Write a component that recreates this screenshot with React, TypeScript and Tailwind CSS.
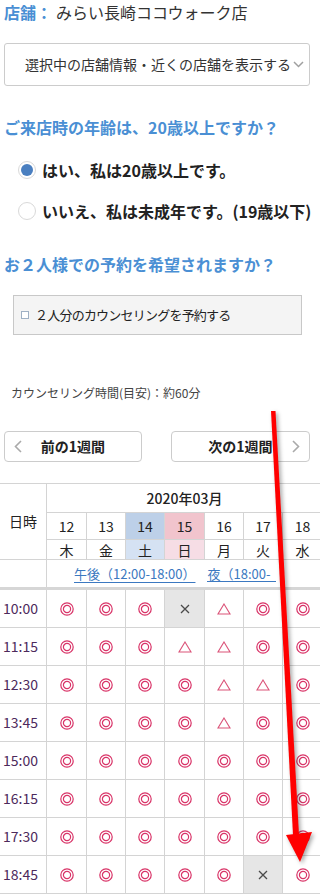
import React from 'react'

type Mark = 'o' | 't' | 'x'

const DAYS = [
  { num: '12', wd: '木', tone: 'plain' },
  { num: '13', wd: '金', tone: 'plain' },
  { num: '14', wd: '土', tone: 'sat' },
  { num: '15', wd: '日', tone: 'sun' },
  { num: '16', wd: '月', tone: 'plain' },
  { num: '17', wd: '火', tone: 'plain' },
  { num: '18', wd: '水', tone: 'plain' },
] as const

const SLOTS: { time: string; marks: Mark[] }[] = [
  { time: '10:00', marks: ['o', 'o', 'o', 'x', 't', 'o', 'o'] },
  { time: '11:15', marks: ['o', 'o', 'o', 't', 't', 'o', 'o'] },
  { time: '12:30', marks: ['o', 'o', 'o', 'o', 't', 't', 'o'] },
  { time: '13:45', marks: ['o', 'o', 'o', 'o', 't', 'o', 'o'] },
  { time: '15:00', marks: ['o', 'o', 'o', 'o', 'o', 'o', 'o'] },
  { time: '16:15', marks: ['o', 'o', 'o', 'o', 'o', 'o', 'o'] },
  { time: '17:30', marks: ['o', 'o', 'o', 'o', 'o', 'o', 'o'] },
  { time: '18:45', marks: ['o', 'o', 'o', 'o', 'o', 'x', 'o'] },
]

const COLS = 'grid grid-cols-[46px_39px_38px_38px_39px_38px_38px_39px] gap-px'

function Symbol({ mark }: { mark: Mark }) {
  if (mark === 'o') {
    return (
      <svg width="14" height="14" viewBox="0 0 14 14" fill="none" stroke="#d93468" strokeWidth="1.2">
        <circle cx="7" cy="7" r="6.2" />
        <circle cx="7" cy="7" r="3.6" />
      </svg>
    )
  }
  if (mark === 't') {
    return (
      <svg width="14" height="12" viewBox="0 0 14 12" fill="none" stroke="#db5479" strokeWidth="1.1">
        <path d="M7 1 L13 11 L1 11 Z" />
      </svg>
    )
  }
  return (
    <svg width="10" height="10" viewBox="0 0 10 10" fill="none" stroke="#4a4a4a" strokeWidth="1.3">
      <path d="M1 1 L9 9 M9 1 L1 9" />
    </svg>
  )
}

function Chevron({ dir }: { dir: 'left' | 'right' }) {
  return (
    <svg width="8" height="13" viewBox="0 0 8 13" fill="none" stroke="#aaaaaa" strokeWidth="1.6">
      <path d={dir === 'left' ? 'M7 1 L1.5 6.5 L7 12' : 'M1 1 L6.5 6.5 L1 12'} />
    </svg>
  )
}

function Radio({ checked, label }: { checked?: boolean; label: string }) {
  return (
    <div className="flex items-center gap-[6px] pl-[18px] text-[16px] font-bold leading-6 text-[#222]">
      <span className="flex h-[18px] w-[18px] shrink-0 items-center justify-center rounded-full border border-[#d9d9d9] bg-white">
        {checked && <span className="h-[12px] w-[12px] rounded-full bg-[#4a7fc0]" />}
      </span>
      <span className="whitespace-nowrap">{label}</span>
    </div>
  )
}

function Schedule() {
  return (
    <div className="mt-[21px] w-[320px] overflow-hidden text-[#222]">
      <div className={`${COLS} bg-[#d4d4d4] pt-px grid-rows-[28px_26px_19px_27px] text-[14px]`}>
        <div className="row-span-3 flex items-center justify-center bg-white">日時</div>
        <div className="col-span-7 flex items-center justify-center bg-white font-medium">2020年03月</div>
        {DAYS.map((d) => (
          <div
            key={d.num}
            className={`flex items-center justify-center ${
              d.tone === 'sat' ? 'bg-[#bdd0e8]' : d.tone === 'sun' ? 'bg-[#f1c4cd]' : 'bg-white'
            }`}
          >
            {d.num}
          </div>
        ))}
        {DAYS.map((d) => (
          <div
            key={d.wd}
            className={`flex items-center justify-center leading-none ${
              d.tone === 'sat' ? 'bg-[#d5e2f3]' : d.tone === 'sun' ? 'bg-[#f6dde5]' : 'bg-white'
            }`}
          >
            {d.wd}
          </div>
        ))}
        <div className="bg-white" />
        <div className="col-span-7 flex items-center gap-[12px] whitespace-nowrap bg-white pl-[27px] text-[13px] text-[#3b78c0]">
          <span className="underline underline-offset-[3px]">午後（12:00-18:00）</span>
          <span className="border-b border-[#3b78c0] pr-[6px] leading-[15px]">夜（18:00-</span>
        </div>
      </div>
      <div className="h-[3px] w-full bg-[#d6d6d6]" />
      <div className={`${COLS} bg-[#d4d4d4] auto-rows-[37px] pb-px`}>
        {SLOTS.map((s) => (
          <React.Fragment key={s.time}>
            <div className="flex items-center bg-white pl-[3px] text-[14px] text-[#4d2a5c]">{s.time}</div>
            {s.marks.map((m, i) => (
              <div
                key={i}
                className={`flex items-center justify-center ${m === 'x' ? 'bg-[#e6e6e6]' : 'bg-white'}`}
              >
                <Symbol mark={m} />
              </div>
            ))}
          </React.Fragment>
        ))}
      </div>
    </div>
  )
}

export default function App() {
  return (
    <div className="relative h-[894px] w-[320px] overflow-hidden bg-white font-['Noto_Sans_CJK_JP',sans-serif] text-[#333]">
      <p className="pl-1 text-[16px] leading-6 whitespace-nowrap">
        <span className="font-bold text-[#4a8fd4]">店舗：</span>
        <span className="ml-1">みらい長崎ココウォーク店</span>
      </p>

      <div className="mx-1 mt-[19px] flex h-[43px] w-[306px] items-center rounded-[3px] border border-[#cccccc] pl-5 text-[14px] text-[#333]">
        <span className="whitespace-nowrap">選択中の店舗情報・近くの店舗を表示する</span>
        <svg className="ml-[2px]" width="11" height="7" viewBox="0 0 11 7" fill="none" stroke="#a0a0a0" strokeWidth="1.5">
          <path d="M1 1 L5.5 5.5 L10 1" />
        </svg>
      </div>

      <h2 className="mt-[29px] pl-1 text-[16px] font-bold leading-6 text-[#4a8fd4]">ご来店時の年齢は、20歳以上ですか？</h2>
      <div className="mt-[19px]">
        <Radio checked label="はい、私は20歳以上です。" />
      </div>
      <div className="mt-[17px]">
        <Radio label="いいえ、私は未成年です。(19歳以下)" />
      </div>

      <h2 className="mt-[29px] pl-1 text-[16px] font-bold leading-6 text-[#4a8fd4]">お２人様での予約を希望されますか？</h2>
      <div className="ml-[13px] mt-[19px] flex h-[40px] w-[289px] items-center border border-[#c8c8c8] bg-[#f4f4f4] pl-[7px] text-[13px] text-[#222]">
        <span className="h-[8px] w-[8px] border border-[#9fb0c4] bg-white" />
        <span className="ml-[6px] tracking-[-0.06em]">２人分のカウンセリングを予約する</span>
      </div>

      <p className="mt-[49px] pl-[11px] text-[12px] leading-[18px] text-[#444]">カウンセリング時間(目安)：約60分</p>

      <div className="mt-[29px] flex items-center">
        <button className="ml-1 flex h-[31px] w-[138px] items-center rounded-[4px] border border-[#cccccc] bg-white px-[9px] text-[14px] font-bold text-[#222]">
          <Chevron dir="left" />
          <span className="flex-1 pr-[8px] text-center">前の1週間</span>
        </button>
        <button className="ml-[29px] flex h-[31px] w-[139px] items-center rounded-[4px] border border-[#cccccc] bg-white px-[9px] text-[14px] font-bold text-[#222]">
          <span className="flex-1 pl-[8px] text-center">次の1週間</span>
          <Chevron dir="right" />
        </button>
      </div>

      <Schedule />

      <svg
        className="pointer-events-none absolute left-0 top-0 drop-shadow-[2px_2px_2px_rgba(0,0,0,0.35)]"
        width="320"
        height="894"
        viewBox="0 0 320 894"
      >
        <polygon points="271,411 275.5,411 299,835 293,835" fill="#ff0000" />
        <polygon points="286,835 312,832 300,862" fill="#ff0000" />
      </svg>
    </div>
  )
}
